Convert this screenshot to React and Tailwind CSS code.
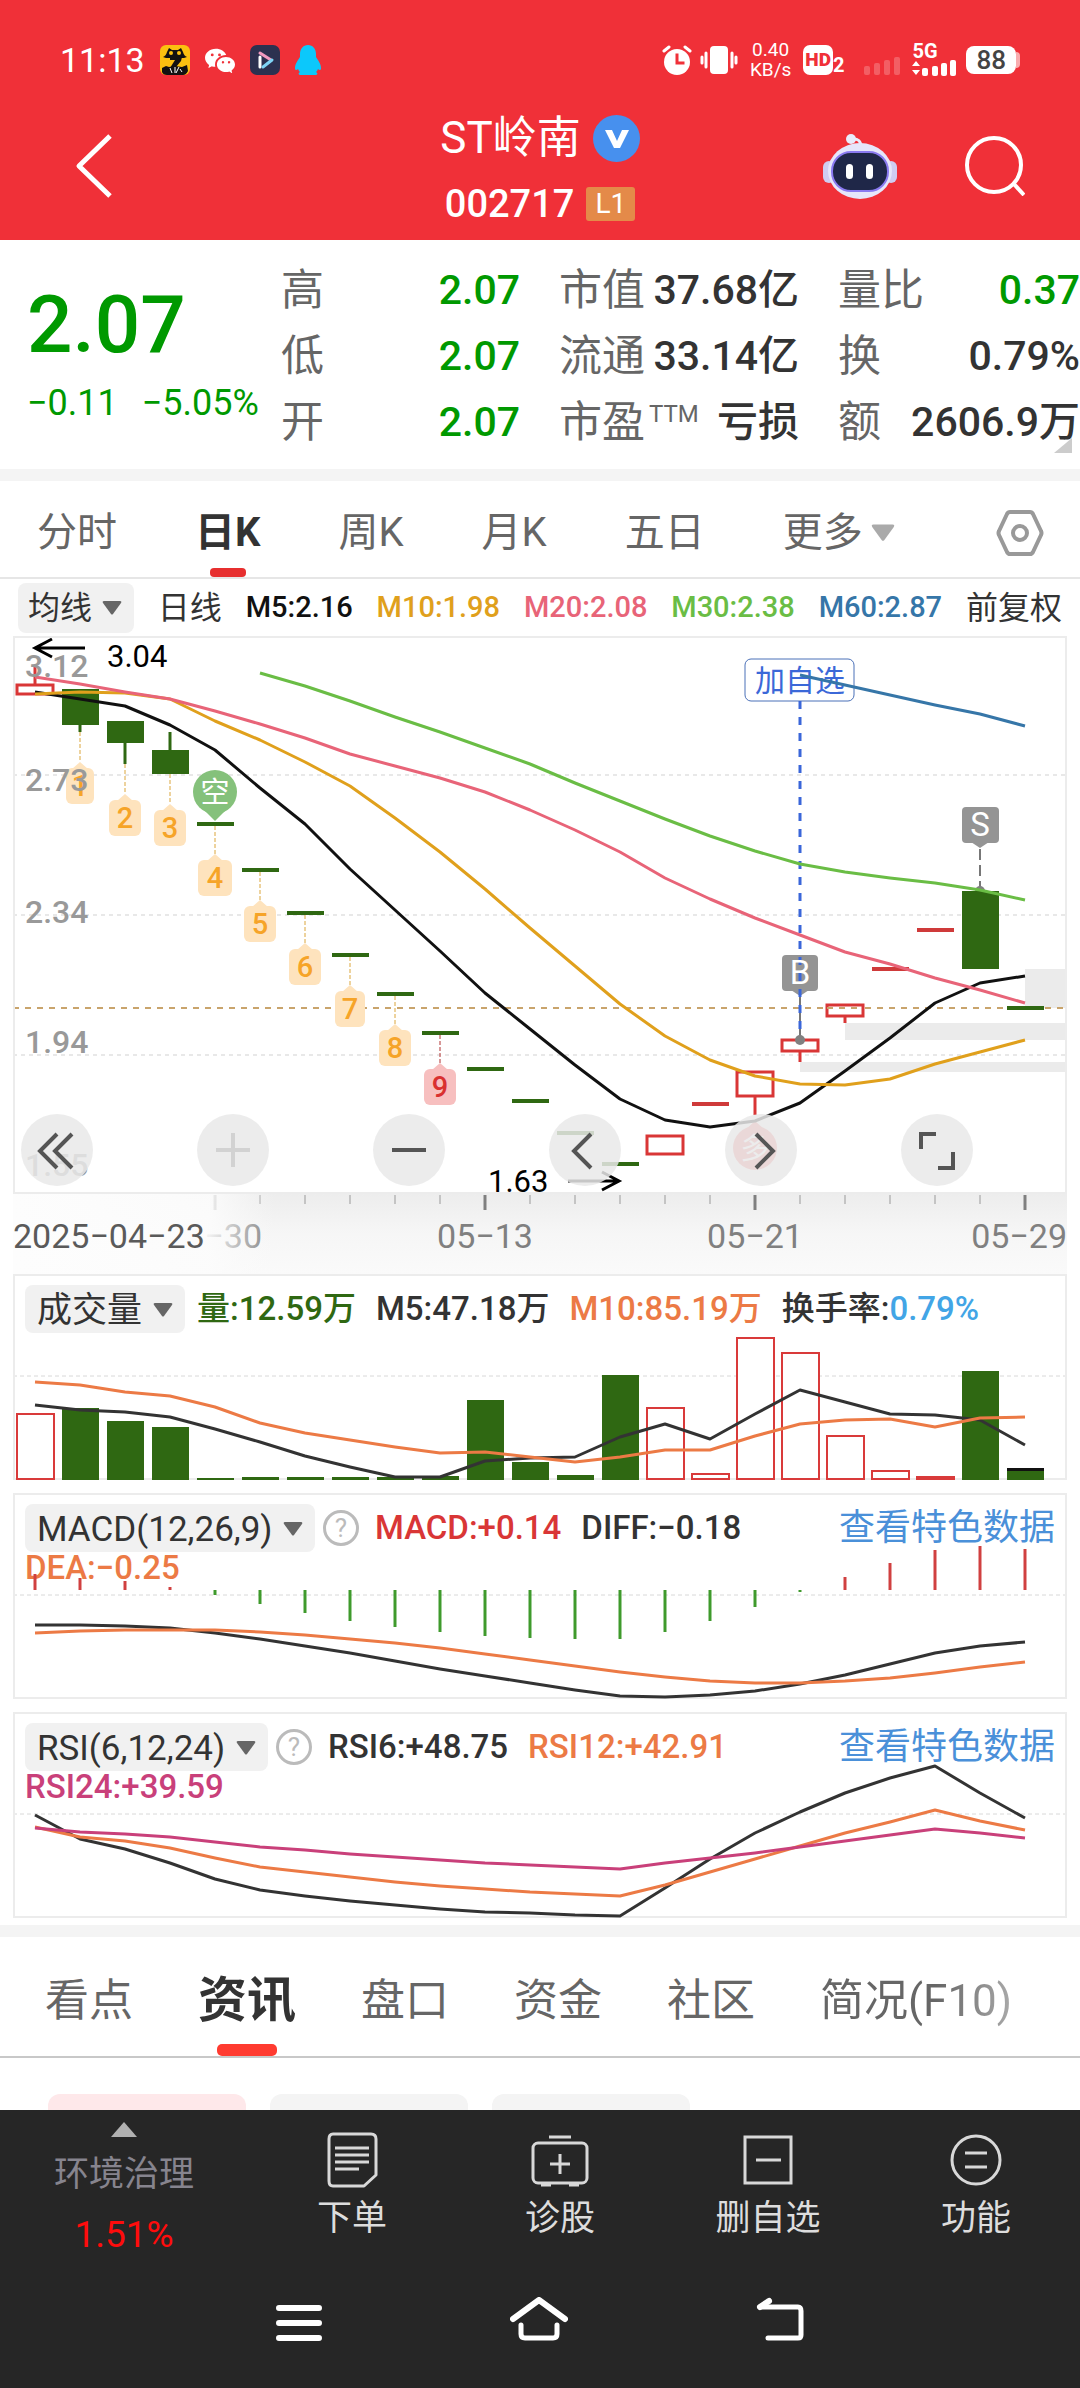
import React from 'react'
import { BsWechat } from 'react-icons/bs'

// Column centre of the i-th trading day, shared by every chart
const colX = (i) => 22 + i * 45

const toPoints = (values, start = 0) =>
  values.map((y, i) => `${colX(i + start)},${y}`).join(' ')

const stats = [
  [
    { label: '高', value: '2.07', green: true },
    { label: '低', value: '2.07', green: true },
    { label: '开', value: '2.07', green: true },
  ],
  [
    { label: '市值', value: '37.68亿' },
    { label: '流通', value: '33.14亿' },
    { label: '市盈', sup: 'TTM', value: '亏损' },
  ],
  [
    { label: '量比', value: '0.37', green: true },
    { label: '换', value: '0.79%' },
    { label: '额', value: '2606.9万' },
  ],
]

const periods = ['分时', '日K', '周K', '月K', '五日']

const averages = [
  { text: 'M5:2.16', color: 'text-[#111111]' },
  { text: 'M10:1.98', color: 'text-[#e0a01c]' },
  { text: 'M20:2.08', color: 'text-[#e86478]' },
  { text: 'M30:2.38', color: 'text-[#6abd45]' },
  { text: 'M60:2.87', color: 'text-[#3676a8]' },
]

// type: up = hollow red, down = filled green, flat = one-price day
const candles = [
  { type: 'up', top: 49, bottom: 58, high: 31 },
  { type: 'down', top: 53, bottom: 89, low: 96 },
  { type: 'down', top: 85, bottom: 107, low: 128 },
  { type: 'down', top: 114, bottom: 138, high: 96 },
  { type: 'flat', top: 188 },
  { type: 'flat', top: 234 },
  { type: 'flat', top: 277 },
  { type: 'flat', top: 319 },
  { type: 'flat', top: 358 },
  { type: 'flat', top: 397 },
  { type: 'flat', top: 433 },
  { type: 'flat', top: 465 },
  { type: 'flat', top: 497 },
  { type: 'flat', top: 528 },
  { type: 'up', top: 500, bottom: 518 },
  { type: 'flat', top: 468, rise: true },
  { type: 'up', top: 436, bottom: 460, low: 479 },
  { type: 'up', top: 404, bottom: 415, low: 426 },
  { type: 'up', top: 369, bottom: 380, low: 387 },
  { type: 'flat', top: 333, rise: true },
  { type: 'flat', top: 294, rise: true },
  { type: 'down', top: 255, bottom: 333 },
  { type: 'flat', top: 372 },
]

const ma5 = [56, 63, 70, 89, 114, 152, 188, 233, 274, 315, 357, 393, 429, 463, 484, 491, 485, 467, 435, 402, 367, 347, 340]
const ma10 = [58, 56, 57, 63, 85, 104, 126, 150, 182, 216, 253, 292, 330, 368, 400, 424, 440, 448, 449, 443, 428, 416, 404]
const ma20 = [41, 48, 56, 63, 75, 88, 102, 118, 130, 142, 156, 174, 194, 216, 242, 263, 282, 299, 316, 328, 342, 354, 367]
const ma30 = [37, 50, 65, 81, 96, 112, 128, 147, 165, 183, 200, 215, 228, 236, 242, 247, 254, 264]
const ma60 = [39, 49, 59, 69, 78, 90]

// Nine-turn sequence markers under the candles
const turns = [
  { n: 1, from: 96, tip: 126, w: 28 },
  { n: 2, from: 128, tip: 158, w: 32 },
  { n: 3, from: 138, tip: 168, w: 32 },
  { n: 4, from: 190, tip: 218, w: 34 },
  { n: 5, from: 236, tip: 264, w: 32 },
  { n: 6, from: 279, tip: 307, w: 32 },
  { n: 7, from: 321, tip: 349, w: 30 },
  { n: 8, from: 360, tip: 388, w: 32 },
  { n: 9, from: 399, tip: 427, w: 32 },
]

const priceLabels = [
  { text: '3.12', y: 41 },
  { text: '2.73', y: 155 },
  { text: '2.34', y: 287 },
  { text: '1.94', y: 417 },
  { text: '1.55', y: 540 },
]

const volumes = [
  { top: 140, up: true }, { top: 134 }, { top: 147 }, { top: 153 }, { top: 204 }, { top: 203 },
  { top: 203 }, { top: 203 }, { top: 203 }, { top: 202 }, { top: 126 }, { top: 188 },
  { top: 201 }, { top: 101 }, { top: 134, up: true }, { top: 200, up: true }, { top: 64, up: true },
  { top: 79, up: true }, { top: 162, up: true }, { top: 197, up: true }, { top: 203, up: true },
  { top: 97 }, { top: 195 },
]
const vol5 = [131, 136, 138, 143, 155, 168, 182, 193, 203, 203, 187, 184, 183, 163, 150, 165, 140, 116, 128, 140, 141, 146, 171]
const vol10 = [108, 111, 118, 122, 133, 149, 159, 166, 173, 179, 178, 183, 188, 183, 176, 176, 162, 150, 146, 145, 153, 144, 143]

const macdBars = [81, 85, 88, 94, 102, 111, 120, 128, 134, 139, 143, 145, 146, 146, 139, 128, 114, 99, 84, 70, 57, 53, 56]
const diff = [132, 132, 133, 135, 140, 146, 153, 160, 168, 176, 183, 190, 197, 203, 204, 202, 198, 191, 182, 171, 160, 153, 149]
const dea = [140, 138, 137, 137, 137, 139, 142, 146, 150, 155, 161, 167, 173, 179, 184, 188, 190, 190, 188, 185, 180, 174, 169]

const rsi6 = [103, 127, 137, 151, 167, 178, 184, 189, 193, 197, 200, 201, 203, 204, 176, 147, 121, 100, 81, 66, 54, 81, 106]
const rsi12 = [115, 125, 129, 136, 146, 155, 160, 165, 170, 174, 177, 180, 182, 184, 173, 160, 147, 134, 121, 110, 98, 109, 118]
const rsi24 = [116, 120, 122, 125, 130, 135, 138, 142, 145, 148, 151, 153, 155, 157, 151, 146, 141, 135, 129, 123, 117, 121, 126]

const infoTabs = ['看点', '资讯', '盘口', '资金', '社区']

const Line = ({ values, start, color, width = 3 }) => (
  <polyline points={toPoints(values, start)} fill="none" stroke={color} strokeWidth={width} strokeLinejoin="round" />
)

const Frame = ({ height }) => (
  <rect x="1" y="1" width="1052" height={height - 2} fill="none" stroke="#ececec" strokeWidth="2" />
)

const Caret = ({ className }) => (
  <svg className={className} viewBox="0 0 20 14" fill="currentColor" aria-hidden="true">
    <path d="M2 0h16q2 0 1 2l-8 11q-1 1-2 0L1 2Q0 0 2 0z" />
  </svg>
)

function StatusBar() {
  return (
    <div className="flex items-center justify-between pt-10 pr-[60px] pl-[60px]">
      <div className="flex h-10 items-center gap-[15px]">
        <span className="text-[34px] leading-10">11:13</span>
        <svg className="size-[30px]" viewBox="0 0 30 30">
          <rect width="30" height="30" rx="6" fill="#fbc010" />
          <path d="M3 12q3-1 4-5l2-4 3 2h6l3-2 2 4q1 4 4 5l-3 1H6z" fill="#111" />
          <circle cx="11" cy="8" r="2" fill="#fbc010" />
          <circle cx="19" cy="8" r="2" fill="#fbc010" />
          <path d="M10 12h12l-1 4-5 6-6 1 5-8h-5z" fill="#111" />
          <path d="M2 23l4-2 3 1 6-1 7 1 5-2 1 6q-2 4-5 4H7q-4 0-5-3z" fill="#111" />
          <path d="M10 23l2 5m3-6v6m4-6l-3 6m4-4l2 3" stroke="#fff" strokeWidth="1" />
        </svg>
        <BsWechat className="size-[30px]" />
        <svg className="size-[30px]" viewBox="0 0 30 30" fill="none" strokeWidth="3" strokeLinecap="round" strokeLinejoin="round">
          <rect width="30" height="30" rx="7" fill="#2c3150" />
          <path d="M10 22V12" stroke="#fff" />
          <path d="M10 8l11 7" stroke="#f39ac0" />
          <path d="M22 15l-9 7" stroke="#7fd4f5" />
        </svg>
        <svg className="h-[30px] w-[26px]" viewBox="0 0 26 30" fill="#0cc8fb">
          <path d="M13 0c5 0 8 4 8 9v3c2 3 5 7 5 11 0 3-2 2-3 1-1 2-1 2-2 3 2 1 2 3-1 3H6c-3 0-3-2-1-3-1-1-1-1-2-3-1 1-3 2-3-1 0-4 3-8 5-11V9c0-5 3-9 8-9z" />
        </svg>
      </div>
      <div className="flex h-10 items-center gap-2">
        <svg className="size-[30px]" viewBox="0 0 30 30" fill="none" stroke="white" strokeWidth="3" strokeLinecap="round">
          <circle cx="15" cy="17" r="13" fill="white" stroke="none" />
          <path d="M2 6l5-4M28 6l-5-4" />
          <path d="M15 10v8h6" stroke="#f03038" strokeLinecap="square" />
        </svg>
        <svg className="h-[30px] w-[38px]" viewBox="0 0 38 30" stroke="white" strokeWidth="3" strokeLinecap="round">
          <rect x="10" y="1" width="18" height="28" rx="4" fill="white" stroke="none" />
          <path d="M6 8v14M2 12v6M32 8v14M36 12v6" />
        </svg>
        <div className="flex flex-col pl-1 text-center text-[19px] leading-[20px]">
          <span>0.40</span>
          <span>KB/s</span>
        </div>
        <div className="flex items-end pl-1">
          <span className="rounded-[7px] bg-white px-[2px] text-[19px] leading-[30px] font-black text-[#f03038]">HD</span>
          <span className="text-[20px] leading-[20px] font-bold">2</span>
        </div>
        <svg className="ml-3 h-[30px] w-9" viewBox="0 0 36 30" fill="white" opacity="0.22">
          <rect x="0" y="21" width="6" height="9" rx="2" />
          <rect x="10" y="18" width="6" height="12" rx="2" />
          <rect x="20" y="15" width="6" height="15" rx="2" />
          <rect x="30" y="12" width="6" height="18" rx="2" />
        </svg>
        <div className="flex flex-col pl-1">
          <span className="h-4 text-[20px] leading-[14px] font-bold">5G</span>
          <svg className="h-4 w-[46px]" viewBox="0 0 46 16" fill="white">
            <path d="M0 6l4-5 4 5zM0 10l4 5 4-5z" />
            <rect x="10" y="8" width="6" height="8" rx="2" />
            <rect x="20" y="6" width="6" height="10" rx="2" />
            <rect x="29" y="3" width="6" height="13" rx="2" />
            <rect x="38" y="0" width="6" height="16" rx="2" />
          </svg>
        </div>
        <div className="flex items-center">
          <span className="rounded-[8px] bg-white px-[10px] text-[26px] leading-7 font-medium text-[#444444]">88</span>
          <span className="h-4 w-1 rounded-r bg-white/60" />
        </div>
      </div>
    </div>
  )
}

function TitleBar() {
  return (
    <div className="grid grid-cols-[1fr_auto_1fr] items-center px-[55px] pt-7">
      <button aria-label="返回" className="mb-4 ml-5 w-10">
        <svg className="h-[66px] w-10" viewBox="0 0 40 66" fill="none" stroke="white" strokeWidth="5" strokeLinejoin="round">
          <path d="M35 3L4 33l31 30" />
        </svg>
      </button>
      <div className="flex flex-col items-center">
        <h1 className="flex items-center gap-3 text-[44px] leading-[60px]">
          ST岭南
          <svg className="size-[47px]" viewBox="0 0 47 47">
            <circle cx="23.5" cy="23.5" r="23.5" fill="#4790ee" />
            <path d="M12 15h7l5 11 5-11h7l-9 18h-6z" fill="white" />
          </svg>
        </h1>
        <div className="flex h-[72px] items-center gap-3 text-[38px] font-medium">
          002717
          <span className="rounded-[3px] bg-[#e48a49] px-[9px] text-[28px] leading-[34px] font-normal">L1</span>
        </div>
      </div>
      <div className="mb-4 flex items-center justify-end gap-[68px]">
        <button aria-label="智能助手">
          <svg className="h-[67px] w-[74px]" viewBox="0 0 74 67">
            <path d="M38 14q0-9-9-8" fill="none" stroke="#e9ecfb" strokeWidth="3" />
            <circle cx="28" cy="6" r="5" fill="#e9ecfb" />
            <rect x="0" y="28" width="12" height="22" rx="6" fill="#cfcdf2" />
            <rect x="62" y="28" width="12" height="22" rx="6" fill="#cfcdf2" />
            <ellipse cx="37" cy="38" rx="32" ry="28" fill="#e6e6fa" />
            <rect x="9" y="19" width="56" height="39" rx="19" fill="#1f2748" stroke="#8a7af0" strokeWidth="2" />
            <rect x="23" y="31" width="7" height="15" rx="3.500" fill="white" />
            <rect x="43" y="31" width="7" height="15" rx="3.500" fill="white" />
          </svg>
        </button>
        <button aria-label="搜索">
          <svg className="size-[60px]" viewBox="0 0 60 60" fill="none" stroke="white" strokeWidth="4">
            <circle cx="29" cy="29" r="27" />
            <path d="M48 47l11 12" />
          </svg>
        </button>
      </div>
    </div>
  )
}

function Quote() {
  return (
    <section className="relative grid grid-cols-[254px_239px_279px_1fr] pt-[17px] pb-[14px] pl-[27px]">
      <div className="flex flex-col text-[#009900]">
        <span className="pt-5 text-[80px] leading-[96px] font-medium">2.07</span>
        <div className="flex gap-6 text-[36px] leading-[60px] whitespace-nowrap">
          <span>−0.11</span>
          <span>−5.05%</span>
        </div>
      </div>
      {stats.map((column, c) => (
        <dl key={c} className={c === 0 ? '' : 'pl-[39px]'}>
          {column.map((item) => (
            <div key={item.label} className="flex h-[66px] items-center justify-between whitespace-nowrap">
              <dt className="flex text-[43px] leading-[60px] text-[#666666]">
                {item.label}
                {item.sup && <sup className="top-0 pt-2 pl-1 text-[24px] leading-[28px]">{item.sup}</sup>}
              </dt>
              <dd className={`text-[41px] leading-[60px] font-medium ${item.green ? 'text-[#009900]' : 'text-[#333333]'}`}>
                {item.value}
              </dd>
            </div>
          ))}
        </dl>
      ))}
      <svg className="absolute right-2 bottom-4 h-[15px] w-[18px]" viewBox="0 0 18 15" fill="#cccccc">
        <path d="M18 0v15H0z" />
      </svg>
    </section>
  )
}

function PeriodTabs() {
  return (
    <nav className="flex h-[98px] items-center gap-[78px] border-b-2 border-[#e6e6e6] pt-2 pl-[37px] text-[40px] text-[#666666]">
      {periods.map((name) =>
        name === '日K' ? (
          <button key={name} className="flex h-full flex-col items-center font-bold text-[#333333]">
            <span className="pt-[14px] leading-[60px]">{name}</span>
            <span className="mt-auto h-[9px] w-9 rounded-[4px] bg-[#e72f2f]" />
          </button>
        ) : (
          <button key={name} className="whitespace-nowrap">{name}</button>
        )
      )}
      <button className="flex items-center gap-2 whitespace-nowrap">
        更多
        <Caret className="h-[18px] w-6 text-[#aaaaaa]" />
      </button>
      <button aria-label="设置" className="mr-9 ml-auto">
        <svg className="h-[46px] w-12" viewBox="0 0 48 46" fill="none" stroke="#999999" strokeWidth="4" strokeLinejoin="round">
          <path d="M14 2h20q2 0 3 2l8 17q1 2 0 4l-8 17q-1 2-3 2H14q-2 0-3-2L3 25q-1-2 0-4l8-17q1-2 3-2z" />
          <circle cx="24" cy="23" r="7" />
        </svg>
      </button>
    </nav>
  )
}

function Picker({ label, value, small }) {
  return (
    <div className="relative inline-flex shrink-0 text-[#333333]">
      <select
        aria-label={label}
        className={
          small
            ? 'h-[50px] appearance-none rounded-[8px] bg-[#f1f1f1] pr-[41px] pl-[10px] text-[32px] font-normal'
            : 'h-12 appearance-none rounded-[8px] bg-[#f1f1f1] pr-[42px] pl-3 text-[35px] font-normal'
        }
        defaultValue={value}
      >
        <option>{value}</option>
      </select>
      <Caret className="pointer-events-none absolute top-[18px] right-3 h-[14px] w-5 text-[#666666]" />
    </div>
  )
}

function TurnMarker({ i, n, from, tip, w }) {
  const x = colX(i)
  const last = n === 9
  return (
    <g>
      <path d={`M${x} ${from}V${tip}`} stroke={last ? '#b03030' : '#dba63c'} strokeWidth="1" strokeDasharray="4 2" />
      <path d={`M${x - 8} ${tip + 7}L${x} ${tip}L${x + 8} ${tip + 7}z`} fill={last ? '#f7bfbf' : '#fee3bd'} />
      <rect x={x - w / 2} y={tip + 6} width={w} height="36" rx="6" fill={last ? '#f7bfbf' : '#fee3bd'} />
      <text x={x} y={tip + 34} textAnchor="middle" fontSize="29" fontWeight="500" fill={last ? '#d93030' : '#f6a428'}>{n}</text>
    </g>
  )
}

function Candle({ i, type, top, bottom, high, low, rise }) {
  const x = colX(i)
  if (type === 'flat') {
    return <rect x={x - 18} y={top - 2} width="37" height="4" fill={rise ? '#cf3a3a' : '#2f6812'} />
  }
  const color = type === 'up' ? '#d93636' : '#2f6812'
  return (
    <g stroke={color} strokeWidth="3">
      {high && <path d={`M${x} ${high}V${top}`} />}
      {low && <path d={`M${x} ${bottom}V${low}`} />}
      {type === 'up' ? (
        <rect x={x - 18} y={top} width="36" height={bottom - top} fill="white" />
      ) : (
        <rect x={x - 18} y={top} width="37" height={bottom - top} fill={color} stroke="none" />
      )}
    </g>
  )
}

const chartButton =
  'flex size-[72px] items-center justify-center rounded-full bg-[#e9e9e9]/85'

function ChartButtons() {
  const icon = { fill: 'none', stroke: '#555555', strokeWidth: 4, viewBox: '0 0 72 72', className: 'size-[72px]' }
  return (
    <div className="absolute inset-x-0 bottom-2 flex justify-between pr-[94px] pl-2">
      <button aria-label="最早" className={chartButton}>
        <svg {...icon}><path d="M36 20L19 37l17 17M51 20L34 37l17 17" /></svg>
      </button>
      <button aria-label="放大" disabled className={chartButton}>
        <svg {...icon} stroke="#d2d2d2"><path d="M19 36h34M36 19v34" /></svg>
      </button>
      <button aria-label="缩小" className={chartButton}>
        <svg {...icon}><path d="M19 36h34" /></svg>
      </button>
      <button aria-label="向左" className={chartButton}>
        <svg {...icon}><path d="M42 20L25 37l17 17" /></svg>
      </button>
      <button aria-label="向右" className={chartButton}>
        <svg {...icon}><path d="M31 20l17 17-17 17" /></svg>
      </button>
      <button aria-label="全屏" className={chartButton}>
        <svg {...icon}><path d="M20 35V20h15M37 54h15V38" /></svg>
      </button>
    </div>
  )
}

function PriceChart() {
  return (
    <div className="relative">
      <svg className="relative block w-full overflow-visible" viewBox="0 0 1054 558">
        <g stroke="#e8e8e8" strokeWidth="2" strokeDasharray="4 4">
          <path d="M0 139H1054M0 279H1054M0 419H1054" />
        </g>
        <g fill="#ebebeb">
          <rect x="1012" y="333" width="42" height="39" />
          <rect x="832" y="387" width="222" height="17" />
          <rect x="787" y="426" width="267" height="10" />
        </g>
        <path d="M0 372H1054" stroke="#c9a46c" strokeWidth="2" strokeDasharray="6 6" />

        {turns.map((t, k) => <TurnMarker key={t.n} i={k + 1} {...t} />)}
        {candles.map((c, i) => <Candle key={i} i={i} {...c} />)}
        <path d="M814 372H850" stroke="#c9a46c" strokeWidth="2" strokeDasharray="6 6" />

        {/* long / short signals */}
        <g fill="#85c17b">
          <circle cx="202" cy="156" r="22" />
          <path d="M190 173L202 185L214 173z" />
        </g>
        <text x="202" y="167" textAnchor="middle" fontSize="29" fill="white">空</text>
        <g fill="#ee7c7c">
          <circle cx="742" cy="512" r="22" />
          <path d="M732 494L742 485L752 494z" />
        </g>
        <text x="742" y="523" textAnchor="middle" fontSize="29" fill="white">多</text>

        {/* watchlist date */}
        <rect x="732" y="23" width="109" height="42" rx="6" fill="white" stroke="#4a70b8" strokeWidth="1" />
        <text x="787" y="55" textAnchor="middle" fontSize="30" fill="#3b68d8">加自选</text>

        {/* sell mark */}
        <rect x="949" y="171" width="37" height="36" rx="4" fill="#949494" />
        <path d="M958 206L967 212L976 206z" fill="#949494" />
        <text x="967" y="200" textAnchor="middle" fontSize="33" fill="white">S</text>
        <path d="M967 213V252" stroke="#777777" strokeWidth="2" strokeDasharray="11 5" />
        <path d="M962 255a5 5 0 0 1 10 0z" fill="#808080" />

        {/* buy mark */}
        <rect x="769" y="319" width="36" height="36" rx="4" fill="#949494" />
        <path d="M778 354L787 360L796 354z" fill="#949494" />
        <path d="M787 360V404" stroke="#777777" strokeWidth="2" />
        <circle cx="787" cy="404" r="5" fill="#808080" />
        <path d="M787 65V397" stroke="#3a66d9" strokeWidth="3" strokeDasharray="8 8" />
        <text x="787" y="348" textAnchor="middle" fontSize="33" fill="white">B</text>

        <Line values={ma5} color="#111111" />
        <Line values={ma10} color="#e0a01c" />
        <Line values={ma20} color="#e86478" />
        <Line values={ma30} start={5} color="#6abd45" />
        <Line values={ma60} start={17} color="#3676a8" />

        <g fontSize="32" fontWeight="500" fill="#999999">
          {priceLabels.map((p) => <text key={p.text} x="12" y={p.y}>{p.text}</text>)}
        </g>
        <g fill="none" stroke="black" strokeWidth="3">
          <path d="M22 12H72M39 3L22 12L39 21" />
          <path d="M555 545H606M589 536L606 545L589 554" />
        </g>
        <g fontSize="31" fill="black">
          <text x="94" y="31">3.04</text>
          <text x="475" y="556">1.63</text>
        </g>
        <Frame height={558} />
      </svg>
      <ChartButtons />
    </div>
  )
}

function DateAxis() {
  const ticks = Array.from({ length: 19 }, (_, k) => k + 4)
  return (
    <svg className="block w-full" viewBox="0 0 1054 80">
      <defs>
        <linearGradient id="axis-shade" x1="0" y1="0" x2="0" y2="1">
          <stop offset="0" stopColor="#ededed" />
          <stop offset="0.5" stopColor="#f6f6f6" />
          <stop offset="1" stopColor="#fafafa" />
        </linearGradient>
        <linearGradient id="axis-fade" x1="0" y1="0" x2="1" y2="0">
          <stop offset="0" stopColor="#fdfdfd" />
          <stop offset="0.75" stopColor="#fcfcfc" stopOpacity="0.9" />
          <stop offset="1" stopColor="#fafafa" stopOpacity="0" />
        </linearGradient>
      </defs>
      <rect width="1054" height="80" fill="url(#axis-shade)" />
      {ticks.map((i) => {
        const major = i % 6 === 4
        return (
          <path
            key={i}
            d={`M${colX(i)} 1V${major ? 16 : 10}`}
            stroke={major ? '#808080' : '#c4c4c4'}
            strokeWidth={major ? 3 : 2}
          />
        )
      })}
      <g fontSize="34" fill="#808080" textAnchor="middle">
        <text x="249" y="54" textAnchor="end">−30</text>
        <text x="472" y="54">05−13</text>
        <text x="742" y="54">05−21</text>
        <text x="1054" y="54" textAnchor="end">05−29</text>
      </g>
      <rect width="262" height="80" fill="url(#axis-fade)" />
      <text x="0" y="54" fontSize="34" fill="#5a5a5a">2025−04−23</text>
    </svg>
  )
}

function Indicator({ header, extra, children }) {
  return (
    <div className="relative text-[33px] font-medium">
      <div className="absolute inset-x-0 top-0 px-3 pt-[11px] whitespace-nowrap">
        <div className="flex h-12 items-center">{header}</div>
        {extra}
      </div>
      <svg className="pointer-events-none relative block w-full" viewBox="0 0 1054 206">
        <path d="M0 102H1054" stroke="#d8d8d8" strokeWidth="1" strokeDasharray="4 3" />
        <Frame height={206} />
        {children}
      </svg>
    </div>
  )
}

const HelpButton = () => (
  <button aria-label="说明" className="ml-2 flex size-9 shrink-0 items-center justify-center rounded-full border-3 border-[#bbbbbb] text-[26px] leading-none font-normal text-[#bbbbbb]">
    ?
  </button>
)

const FeatureLink = () => (
  <a href="#data" className="ml-auto text-[36px] font-normal text-[#4a90d9]">查看特色数据</a>
)

function InfoTabs() {
  return (
    <nav className="flex h-[121px] items-center gap-[65px] border-b-2 border-[#c8c8c8] pt-2 pl-[45px] text-[44px] whitespace-nowrap text-[#666666]">
      {infoTabs.map((name) =>
        name === '资讯' ? (
          <button key={name} className="flex h-full flex-col items-center text-[49px] font-bold text-[#333333]">
            <span className="pt-5 leading-[72px]">{name}</span>
            <span className="mt-auto h-3 w-[60px] rounded-[5px] bg-[#ff3b30]" />
          </button>
        ) : (
          <button key={name}>{name}</button>
        )
      )}
      <button className="bg-linear-to-r from-[#666666] from-60% to-[#aaaaaa] bg-clip-text text-transparent">简况(F10)</button>
    </nav>
  )
}

const IconOrder = () => (
  <svg className="h-14 w-[58px]" viewBox="0 0 58 56" fill="none" stroke="#d8d8d8" strokeWidth="3" strokeLinejoin="round">
    <path d="M10 2h38q5 0 5 5v36L41 54H10q-4 0-4-5V7q0-5 4-5z" />
    <path d="M12 16h34M12 23h34M12 30h34M12 37h24" />
  </svg>
)

const IconDiagnose = () => (
  <svg className="h-14 w-[58px]" viewBox="0 0 58 56" fill="none" stroke="#d8d8d8" strokeWidth="3">
    <rect x="2" y="11" width="54" height="40" rx="5" />
    <path d="M18 5h22M10 53h10M38 53h10M19 32h20M29 22v20" />
  </svg>
)

const IconRemove = () => (
  <svg className="h-14 w-[58px]" viewBox="0 0 58 56" fill="none" stroke="#d8d8d8" strokeWidth="3">
    <rect x="6" y="5" width="46" height="46" />
    <path d="M17 28h25" />
  </svg>
)

const IconFeatures = () => (
  <svg className="h-14 w-[58px]" viewBox="0 0 58 56" fill="none" stroke="#d8d8d8" strokeWidth="3">
    <circle cx="29" cy="28" r="24" />
    <path d="M18 21h22M18 35h22" />
  </svg>
)

const actions = [
  { label: '下单', Icon: IconOrder },
  { label: '诊股', Icon: IconDiagnose },
  { label: '删自选', Icon: IconRemove },
  { label: '功能', Icon: IconFeatures },
]

function BottomBar() {
  return (
    <footer className="grow bg-[#262626] text-[35px] text-[#dddddd]">
      <div className="grid grid-cols-[248px_repeat(4,1fr)]">
        <button className="flex flex-col items-center pt-3 text-[#86848e]">
          <svg className="h-[15px] w-[26px]" viewBox="0 0 26 15" fill="#b0b0b0"><path d="M13 0l13 15H0z" /></svg>
          <span className="pt-3 leading-[52px]">环境治理</span>
          <span className="pt-2 text-[37px] leading-[52px] text-[#ff0c0c]">1.51%</span>
        </button>
        {actions.map(({ label, Icon }) => (
          <button key={label} className="flex flex-col items-center pt-[22px]">
            <Icon />
            <span className="leading-[62px]">{label}</span>
          </button>
        ))}
      </div>
      <div className="flex items-center justify-center gap-[188px] pt-9 pb-[44px]">
        <button aria-label="菜单">
          <svg className="h-11 w-[46px]" viewBox="0 0 46 44" stroke="white" strokeWidth="6" strokeLinecap="round">
            <path d="M3 11h40M3 26h40M3 41h40" />
          </svg>
        </button>
        <button aria-label="主页">
          <svg className="h-11 w-[58px]" viewBox="0 0 58 44" fill="none" stroke="white" strokeWidth="5" strokeLinecap="round" strokeLinejoin="round">
            <path d="M3 22L29 3l26 19" strokeWidth="6" />
            <path d="M11 28v9q0 4 4 4h28q4 0 4-4v-9" />
          </svg>
        </button>
        <button aria-label="后退">
          <svg className="h-11 w-12" viewBox="0 0 48 44" fill="none" stroke="white" strokeWidth="5" strokeLinecap="round" strokeLinejoin="round">
            <path d="M12 41h30q3 0 3-3V14q0-4-3-4H4" />
            <path d="M13 4L4 10" strokeWidth="6" />
          </svg>
        </button>
      </div>
    </footer>
  )
}

export default function App() {
  return (
    <div className="flex min-h-screen flex-col overflow-hidden bg-white font-['Roboto','Noto_Sans_CJK_SC',sans-serif]">
      <header className="bg-[#f03038] text-white">
        <StatusBar />
        <TitleBar />
      </header>

      <Quote />
      <div className="h-3 bg-[#f4f4f4]" />
      <PeriodTabs />

      <section className="px-[13px]">
        <div className="flex h-[57px] items-center justify-between px-[5px] text-[29px] font-medium whitespace-nowrap text-[#333333]">
          <Picker label="指标" value="均线" small />
          <span className="text-[32px] font-normal">日线</span>
          {averages.map((a) => <span key={a.text} className={a.color}>{a.text}</span>)}
          <button className="text-[32px] font-normal">前复权</button>
        </div>

        <PriceChart />
        <DateAxis />

        <div className="flex flex-col gap-[13px]">
          <Indicator
            header={
              <>
                <Picker label="副图指标一" value="成交量" />
                <div className="flex gap-5 pl-3 text-[#333333]">
                  <span className="text-[#2f6812]">量:12.59万</span>
                  <span>M5:47.18万</span>
                  <span className="text-[#ec7a45]">M10:85.19万</span>
                  <span>换手率:<span className="text-[#42a5e6]">0.79%</span></span>
                </div>
              </>
            }
          >
            {volumes.map((v, i) =>
              v.up ? (
                <rect key={i} x={colX(i) - 18} y={v.top} width="37" height={205 - v.top} fill="white" stroke="#d93a3a" strokeWidth="2" />
              ) : (
                <rect key={i} x={colX(i) - 18} y={v.top} width="37" height={206 - v.top} fill="#2f6812" />
              )
            )}
            <rect x={colX(22) - 18} y="194" width="37" height="3" fill="#111111" />
            <Line values={vol5} color="#333333" />
            <Line values={vol10} color="#ec7a45" />
          </Indicator>

          <Indicator
            header={
              <>
                <Picker label="副图指标二" value="MACD(12,26,9)" />
                <HelpButton />
                <div className="flex gap-5 pl-4 text-[#333333]">
                  <span className="text-[#d93636]">MACD:+0.14</span>
                  <span>DIFF:−0.18</span>
                </div>
                <FeatureLink />
              </>
            }
            extra={<div className="leading-8 text-[#ec7a45]">DEA:−0.25</div>}
          >
            {macdBars.map((y, i) => (
              <path key={i} d={`M${colX(i)} 97V${y}`} stroke={y < 97 ? '#d04040' : '#3f9a2c'} strokeWidth="3" />
            ))}
            <Line values={diff} color="#333333" />
            <Line values={dea} color="#ec7a45" />
          </Indicator>

          <Indicator
            header={
              <>
                <Picker label="副图指标三" value="RSI(6,12,24)" />
                <HelpButton />
                <div className="flex gap-5 pl-4 text-[#333333]">
                  <span>RSI6:+48.75</span>
                  <span className="text-[#ec7a45]">RSI12:+42.91</span>
                </div>
                <FeatureLink />
              </>
            }
            extra={<div className="leading-8 text-[#c9407a]">RSI24:+39.59</div>}
          >
            <Line values={rsi6} color="#333333" />
            <Line values={rsi12} color="#ec7a45" />
            <Line values={rsi24} color="#c9407a" />
          </Indicator>
        </div>
      </section>

      <div className="mt-[7px] h-3 bg-[#f4f4f4]" />
      <InfoTabs />
      <div className="flex gap-6 pt-9 pl-12">
        <div className="h-4 w-[198px] rounded-t-[12px] bg-[#fee8ea]" />
        <div className="h-4 w-[198px] rounded-t-[12px] bg-[#f4f4f4]" />
        <div className="h-4 w-[198px] rounded-t-[12px] bg-[#f4f4f4]" />
      </div>
      <BottomBar />
    </div>
  )
}
